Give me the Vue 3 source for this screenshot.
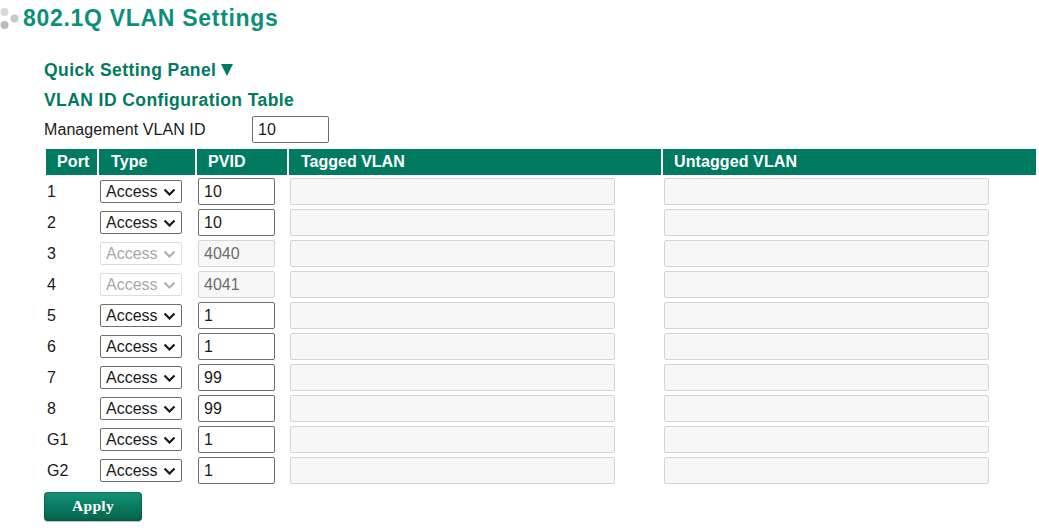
<script setup>
const rows = [
  { port: '1', pvid: '10' }, { port: '2', pvid: '10' },
  { port: '3', pvid: '4040', off: true }, { port: '4', pvid: '4041', off: true },
  { port: '5', pvid: '1' }, { port: '6', pvid: '1' },
  { port: '7', pvid: '99' }, { port: '8', pvid: '99' },
  { port: 'G1', pvid: '1' }, { port: 'G2', pvid: '1' },
]
</script>

<template>
  <div class="page">
    <h1 class="title">
      <svg class="dots" width="20" height="22" viewBox="0 0 20 22">
        <circle cx="4.5" cy="4" r="4" fill="#d8d8d8" />
        <circle cx="14.5" cy="10.5" r="4" fill="#c8c8c8" />
        <circle cx="4.5" cy="17" r="4" fill="#bbbbbb" />
      </svg>
      <span>802.1Q VLAN Settings</span>
    </h1>
    <div class="body">
      <h2 class="panel">Quick Setting Panel <span class="tri"></span></h2>
      <h2 class="table-title">VLAN ID Configuration Table</h2>
      <div class="mgmt">
        <label class="mgmt-label">Management VLAN ID</label>
        <input class="field mgmt-input" value="10" />
      </div>
      <div class="grid">
        <div class="th port-h">Port</div>
        <div class="th type-h">Type</div>
        <div class="th">PVID</div>
        <div class="th tagged">Tagged VLAN</div>
        <div class="th untagged">Untagged VLAN</div>
        <template v-for="r in rows" :key="r.port">
          <div class="cell port">{{ r.port }}</div>
          <div class="cell"><select class="sel" :disabled="r.off"><option>Access</option></select></div>
          <div class="cell"><input class="field pvid" :value="r.pvid" :disabled="r.off" /></div>
          <div class="cell"><input class="field wide" disabled /></div>
          <div class="cell"><input class="field wide" disabled /></div>
        </template>
      </div>
      <button class="apply">Apply</button>
    </div>
  </div>
</template>

<style scoped>
.page {
  width: 1039px;
  height: 530px;
  overflow: hidden;
  font-family: "Liberation Sans", Arial, sans-serif;
  font-size: 16px;
  color: #1a1a1a;
  background: #fff;
}
.title {
  display: flex;
  align-items: center;
  gap: 3px;
  margin: 0;
  padding-top: 4px;
  height: 28px;
  font-size: 23px;
  line-height: 28px;
  letter-spacing: 0.7px;
  color: #0b8f78;
}
.dots { flex: none; margin-top: 2px; }
.body { padding: 28px 0 0 44px; }
.panel, .table-title {
  margin: 0;
  font-size: 17.5px;
  line-height: 20px;
  letter-spacing: 0.42px;
  color: #007a60;
}
.panel { height: 30px; }
.tri {
  display: inline-block;
  width: 0;
  height: 0;
  margin-left: -1px;
  border-left: 6.5px solid transparent;
  border-right: 6.5px solid transparent;
  border-top: 12px solid #007a60;
  vertical-align: 0;
}
.table-title { height: 20px; }
.mgmt {
  display: flex;
  align-items: center;
  height: 27px;
  margin-top: 6px;
}
.mgmt-label { width: 208px; letter-spacing: 0.08px; }
.mgmt-input { width: 77px; height: 27px; }
.grid {
  display: grid;
  grid-template-columns: 51px 96px 90px 372px 373px;
  grid-template-rows: 26px;
  grid-auto-rows: 31px;
  column-gap: 2px;
  margin: 6px 0 0 2px;
  width: 990px;
}
.th {
  background: #007a60;
  color: #fff;
  font-weight: bold;
  line-height: 26px;
  padding-left: 11px;
  letter-spacing: 0.1px;
}
.port-h { padding-left: 11px; }
.type-h { padding-left: 12px; }
.tagged { padding-left: 12px; letter-spacing: 0; }
.untagged { padding-left: 11px; }
.cell {
  display: flex;
  align-items: center;
  padding-left: 1px;
  height: 31px;
  padding-top: 2px;
  box-sizing: border-box;
}
.port { padding-left: 1px; }
.field {
  box-sizing: border-box;
  border: 1px solid #6e6e6e;
  border-radius: 2px;
  background: #fff;
  padding: 0 5px;
  font: 16px "Liberation Sans", Arial, sans-serif;
  color: #1a1a1a;
  outline: none;
}
.field:disabled {
  background: #f7f7f7;
  border-color: #d4d4d4;
  color: #6d6d6d;
}
.pvid { width: 77px; height: 27px; }
.wide { width: 325px; height: 27px; }
.sel {
  box-sizing: border-box;
  width: 82px;
  height: 23px;
  appearance: none;
  border: 1px solid #6e6e6e;
  border-radius: 2px;
  background: #fff url("data:image/svg+xml,%3Csvg xmlns='http://www.w3.org/2000/svg' width='13' height='8' viewBox='0 0 13 8'%3E%3Cpath d='M1.5 1.5l5 5 5-5' fill='none' stroke='%231a1a1a' stroke-width='2.2'/%3E%3C/svg%3E") no-repeat 62px 7px;
  font: 16px "Liberation Sans", Arial, sans-serif;
  color: #1a1a1a;
  padding: 0 0 0 5px;
  outline: none;
}
.sel:disabled {
  opacity: 1;
  color: #a8a8a8;
  border-color: #dcdcdc;
  background: #fff url("data:image/svg+xml,%3Csvg xmlns='http://www.w3.org/2000/svg' width='13' height='8' viewBox='0 0 13 8'%3E%3Cpath d='M1.5 1.5l5 5 5-5' fill='none' stroke='%23b0b0b0' stroke-width='2.2'/%3E%3C/svg%3E") no-repeat 62px 7px;
}
.apply {
  display: block;
  box-sizing: border-box;
  width: 98px;
  height: 29px;
  margin-top: 7px;
  border: none;
  border-radius: 4px;
  background: linear-gradient(#17957a 0%, #0c7f64 40%, #05644c 100%);
  box-shadow: inset 0 0 3px rgba(0, 50, 40, 0.7), 0 1px 1px rgba(0, 0, 0, 0.25);
  color: #fff;
  font: bold 15.5px "Liberation Serif", "Times New Roman", serif;
  letter-spacing: 0.3px;
  padding: 0 0 2px;
}
</style>

<style>
html, body { margin: 0; background: #fff; }
</style>
